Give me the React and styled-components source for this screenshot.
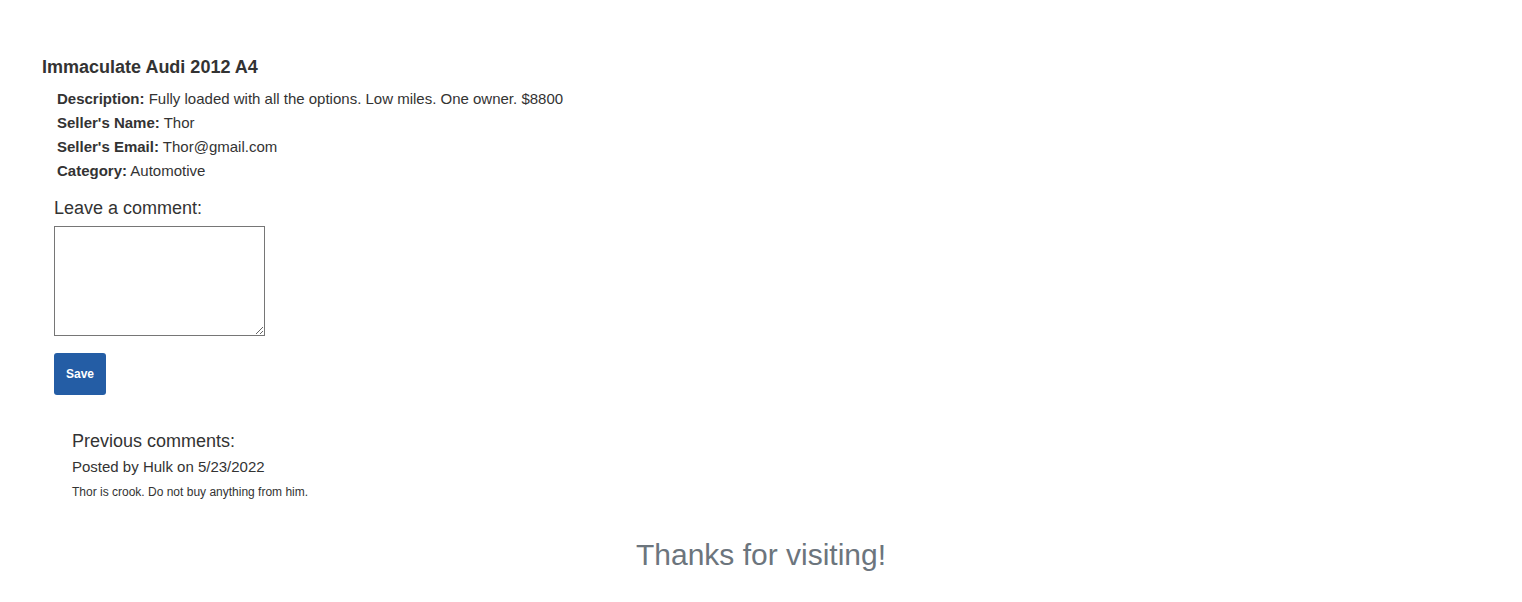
import React from "react";
import styled, { createGlobalStyle } from "styled-components";

const Global = createGlobalStyle`
  body {
    margin: 0;
    background: #fff;
    font-family: "Liberation Sans", Arial, sans-serif;
    color: #333;
  }
`;

const Page = styled.div`
  padding: 56px 0 0 42px;
`;

const Title = styled.h3`
  margin: 0;
  font-size: 18px;
  line-height: 22px;
  font-weight: 700;
`;

const Details = styled.div`
  margin: 9px 0 0 15px;
  display: flex;
  flex-direction: column;
`;

const Row = styled.div`
  font-size: 15px;
  line-height: 24px;
`;

const Label = styled.b`
  font-weight: 700;
`;

const CommentForm = styled.form`
  margin: 13px 0 0 12px;
  display: flex;
  flex-direction: column;
  align-items: flex-start;
`;

const FormLabel = styled.label`
  font-size: 18px;
  line-height: 24px;
`;

const TextArea = styled.textarea`
  margin-top: 6px;
  width: 211px;
  height: 110px;
  box-sizing: border-box;
  border: 1px solid #767676;
  border-radius: 0;
  padding: 2px;
  font-family: "Liberation Mono", monospace;
  resize: both;
`;

const SaveButton = styled.button`
  margin-top: 17px;
  width: 52px;
  height: 42px;
  border: none;
  border-radius: 3px;
  background: #245da5;
  color: #fff;
  font-family: "Liberation Sans", Arial, sans-serif;
  font-weight: 700;
  font-size: 12px;
  padding: 0;
  cursor: pointer;
`;

const Previous = styled.section`
  margin: 34px 0 0 30px;
`;

const PrevHeading = styled.div`
  font-size: 18px;
  line-height: 24px;
`;

const Posted = styled.div`
  font-size: 15px;
  line-height: 20px;
  margin-top: 4px;
`;

const CommentText = styled.div`
  font-size: 12px;
  line-height: 16px;
  margin-top: 7px;
`;

const Footer = styled.div`
  margin: 37px 0 0 -42px;
  text-align: center;
  font-size: 30px;
  line-height: 36px;
  color: #6c757d;
`;

export default function App() {
  return (
    <>
      <Global />
      <Page>
        <Title>Immaculate Audi 2012 A4</Title>
        <Details>
          <Row>
            <Label>Description:</Label> Fully loaded with all the options. Low miles. One owner. $8800
          </Row>
          <Row>
            <Label>Seller's Name:</Label> Thor
          </Row>
          <Row>
            <Label>Seller's Email:</Label> Thor@gmail.com
          </Row>
          <Row>
            <Label>Category:</Label> Automotive
          </Row>
        </Details>
        <CommentForm onSubmit={(e) => e.preventDefault()}>
          <FormLabel htmlFor="comment">Leave a comment:</FormLabel>
          <TextArea id="comment" />
          <SaveButton type="submit">Save</SaveButton>
        </CommentForm>
        <Previous>
          <PrevHeading>Previous comments:</PrevHeading>
          <Posted>Posted by Hulk on 5/23/2022</Posted>
          <CommentText>Thor is crook. Do not buy anything from him.</CommentText>
        </Previous>
        <Footer>Thanks for visiting!</Footer>
      </Page>
    </>
  );
}
